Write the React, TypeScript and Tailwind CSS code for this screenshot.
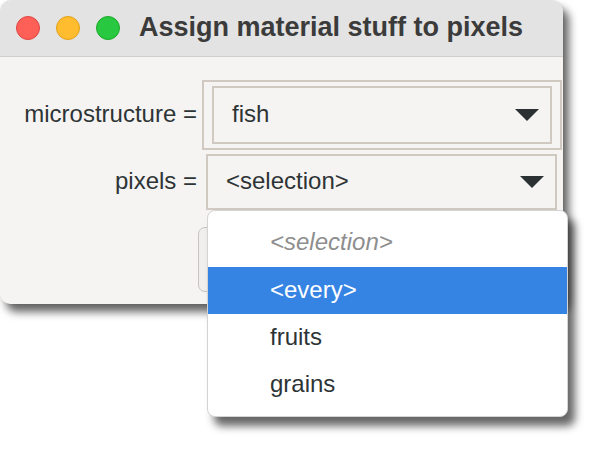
import * as React from 'react';

const sans = "font-['Liberation_Sans','Helvetica_Neue',Arial,sans-serif]";

function Arrow() {
  return (
    <svg width="24" height="12" viewBox="0 0 24 12" className="shrink-0">
      <path d="M0 0 H24 L12 12 Z" fill="#2b3033" />
    </svg>
  );
}

function TrafficLights() {
  return (
    <div className="flex items-center gap-[16px]">
      <span className="w-[24px] h-[24px] rounded-full bg-[#fe5f57] border border-[#e2463f]" />
      <span className="w-[24px] h-[24px] rounded-full bg-[#febc2e] border border-[#e1a116]" />
      <span className="w-[24px] h-[24px] rounded-full bg-[#28c840] border border-[#1aab29]" />
    </div>
  );
}

const options = [
  { label: '<selection>', kind: 'placeholder' },
  { label: '<every>', kind: 'active' },
  { label: 'fruits', kind: 'normal' },
  { label: 'grains', kind: 'normal' },
];

function Popup() {
  return (
    <div className="absolute left-[207px] top-[210px] w-[361px] h-[207px] bg-white rounded-[8px] border border-[#d4d4d4] py-[9px] shadow-[7px_9px_8px_rgba(0,0,0,0.6)]">
      {options.map((o) => (
        <div
          key={o.label}
          className={
            o.kind === 'active'
              ? 'h-[47px] flex items-center pl-[62px] pb-[2px] bg-[#3584e4] text-white'
              : o.kind === 'placeholder'
              ? 'h-[47px] flex items-center pl-[62px] pb-[4px] italic text-[#8e8e8e]'
              : 'h-[47px] flex items-center pl-[62px] pb-[2px] text-[#2e3436]'
          }
        >
          {o.label}
        </div>
      ))}
    </div>
  );
}

export default function App() {
  return (
    <div className={`relative w-[600px] h-[452px] bg-white overflow-hidden ${sans} text-[24px]`}>
      {/* Dialog window */}
      <div className="w-[563px] h-[304px] rounded-t-[12px] rounded-b-[10px] bg-[#f5f4f2] shadow-[6px_8px_8px_rgba(0,0,0,0.6),0_0_3px_rgba(0,0,0,0.12)] flex flex-col">
        {/* Title bar */}
        <div className="h-[57px] shrink-0 flex items-center pl-[16px] gap-[19px] bg-[#e3e3e3] rounded-t-[12px] border-b border-[#d0cfcd]">
          <TrafficLights />
          <span className="text-[27px] font-bold text-[#3b3b3b] pb-[1px]">
            Assign material stuff to pixels
          </span>
        </div>

        {/* Body */}
        <div className="flex flex-col pt-[23px] text-[#2e3436]">
          <div className="flex items-center h-[70px]">
            <span className="w-[198px] text-right pr-[1px] pb-[2px]">microstructure =</span>
            <div className="ml-[4px] w-[360px] h-[70px] border-2 border-[#d0c9c2] px-[8px] py-[4px] flex">
              <div className="flex-1 border-2 border-[#d0c9c2] flex items-center justify-between pl-[18px] pr-[11px]">
                <span className="pb-[2px]">fish</span>
                <Arrow />
              </div>
            </div>
          </div>

          <div className="flex items-center h-[56px] mt-[4px]">
            <span className="w-[198px] text-right pr-[1px] pb-[2px]">pixels =</span>
            <div className="ml-[8px] w-[351px] h-[56px] border-2 border-[#d0c9c2] flex items-center justify-between pl-[18px] pr-[11px]">
              <span className="pb-[2px]">&lt;selection&gt;</span>
              <Arrow />
            </div>
          </div>

          <div className="flex mt-[17px] pl-[198px]">
            <div className="w-[170px] h-[65px] rounded-[7px] border border-[#c8c3be] bg-[#f0efed]" />
          </div>
        </div>
      </div>

      <Popup />
    </div>
  );
}
